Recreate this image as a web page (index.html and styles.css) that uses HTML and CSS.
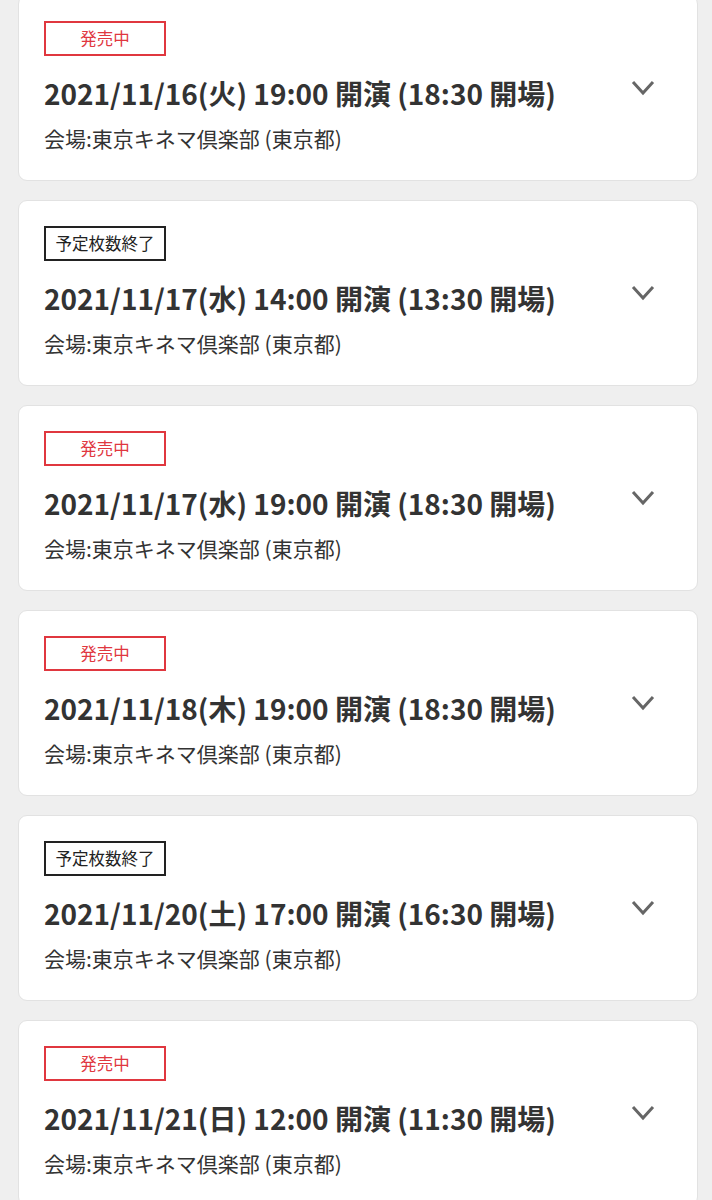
FILE: index.html
```html
<!DOCTYPE html>
<html lang="ja">
<head>
    <meta charset="UTF-8">
    <meta name="viewport" content="width=device-width, initial-scale=1.0">
    <link rel="stylesheet" href="styles.css">
    <title>公演日程</title>
</head>
<body>
    <ul class="schedule">
        <li class="show">
            <div class="show-info">
                <span class="badge badge-sale">発売中</span>
                <p class="show-date">2021/11/16(火) 19:00 開演 (18:30 開場)</p>
                <p class="show-venue">会場:東京キネマ倶楽部 (東京都)</p>
            </div>
            <svg class="chevron" width="24" height="16" viewBox="0 0 24 16"><path d="M2 2 L12 13 L22 2" fill="none" stroke="#666" stroke-width="3"/></svg>
        </li>
        <li class="show">
            <div class="show-info">
                <span class="badge badge-end">予定枚数終了</span>
                <p class="show-date">2021/11/17(水) 14:00 開演 (13:30 開場)</p>
                <p class="show-venue">会場:東京キネマ倶楽部 (東京都)</p>
            </div>
            <svg class="chevron" width="24" height="16" viewBox="0 0 24 16"><path d="M2 2 L12 13 L22 2" fill="none" stroke="#666" stroke-width="3"/></svg>
        </li>
        <li class="show">
            <div class="show-info">
                <span class="badge badge-sale">発売中</span>
                <p class="show-date">2021/11/17(水) 19:00 開演 (18:30 開場)</p>
                <p class="show-venue">会場:東京キネマ倶楽部 (東京都)</p>
            </div>
            <svg class="chevron" width="24" height="16" viewBox="0 0 24 16"><path d="M2 2 L12 13 L22 2" fill="none" stroke="#666" stroke-width="3"/></svg>
        </li>
        <li class="show">
            <div class="show-info">
                <span class="badge badge-sale">発売中</span>
                <p class="show-date">2021/11/18(木) 19:00 開演 (18:30 開場)</p>
                <p class="show-venue">会場:東京キネマ倶楽部 (東京都)</p>
            </div>
            <svg class="chevron" width="24" height="16" viewBox="0 0 24 16"><path d="M2 2 L12 13 L22 2" fill="none" stroke="#666" stroke-width="3"/></svg>
        </li>
        <li class="show">
            <div class="show-info">
                <span class="badge badge-end">予定枚数終了</span>
                <p class="show-date">2021/11/20(土) 17:00 開演 (16:30 開場)</p>
                <p class="show-venue">会場:東京キネマ倶楽部 (東京都)</p>
            </div>
            <svg class="chevron" width="24" height="16" viewBox="0 0 24 16"><path d="M2 2 L12 13 L22 2" fill="none" stroke="#666" stroke-width="3"/></svg>
        </li>
        <li class="show">
            <div class="show-info">
                <span class="badge badge-sale">発売中</span>
                <p class="show-date">2021/11/21(日) 12:00 開演 (11:30 開場)</p>
                <p class="show-venue">会場:東京キネマ倶楽部 (東京都)</p>
            </div>
            <svg class="chevron" width="24" height="16" viewBox="0 0 24 16"><path d="M2 2 L12 13 L22 2" fill="none" stroke="#666" stroke-width="3"/></svg>
        </li>
    </ul>
</body>
</html>
```

FILE: styles.css
```css
body {
    font-family: "Noto Sans CJK JP", "Noto Sans", sans-serif;
    background-color: #efefef;
    color: #333;
    margin: 0;
    padding: 0;
}

.schedule {
    list-style: none;
    margin: -5px 0 0;
    padding: 0 14px 0 18px;
    display: flex;
    flex-direction: column;
    gap: 19px;
}

.show {
    background: #fff;
    border: 1px solid #e2e2e2;
    border-radius: 9px;
    height: 186px;
    box-sizing: border-box;
    padding: 25px 42px 0 25px;
    display: flex;
    justify-content: space-between;
    align-items: flex-start;
}

.badge {
    display: inline-block;
    box-sizing: border-box;
    width: 122px;
    height: 35px;
    line-height: 31px;
    text-align: center;
    font-size: 16.5px;
    border: 2px solid;
}

.badge-sale {
    color: #e0373f;
    border-color: #e0373f;
}

.badge-end {
    color: #222;
    border-color: #222;
}

.show-date {
    margin: 17px 0 0;
    font-size: 28px;
    font-weight: bold;
    line-height: 40px;
}

.show-venue {
    margin: 10px 0 0;
    font-size: 21px;
    line-height: 30px;
}

.chevron {
    margin-top: 59px;
}
```
